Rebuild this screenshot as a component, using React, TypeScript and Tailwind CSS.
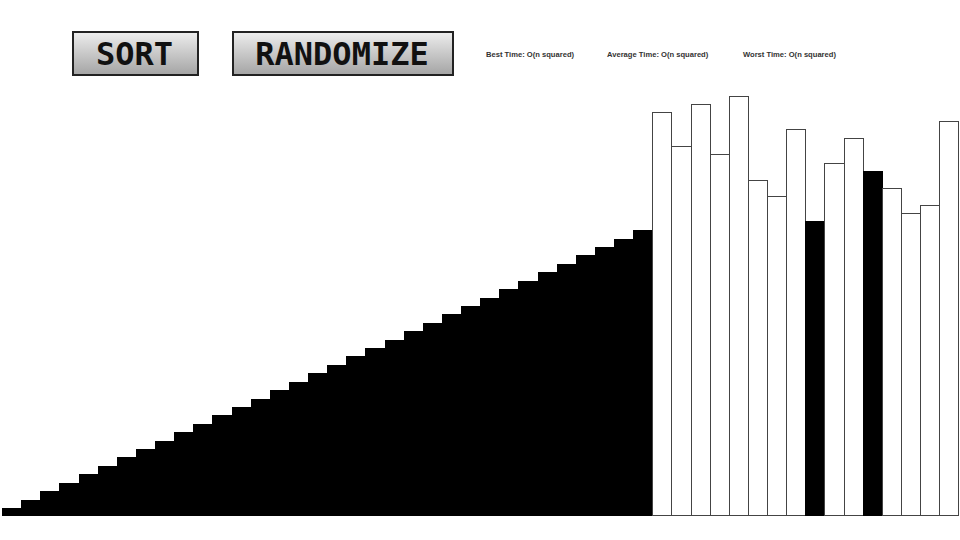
const sortedCount = 34;
const restTops = [112, 146, 104, 154, 96, 180, 196, 129, 221, 163, 138, 171, 188, 213, 205, 121];
const doneTops = [221, 171];
const baseline = 516;

const bars = [
  ...Array.from({ length: sortedCount }, (_, i) => ({ height: 8 + i * 8.42, done: true })),
  ...restTops.map((top) => ({ height: baseline - top, done: doneTops.includes(top) })),
];

const stats = [
  { label: "Best Time: O(n squared)", width: "w-[121px]" },
  { label: "Average Time: O(n squared)", width: "w-[136px]" },
  { label: "Worst Time: O(n squared)", width: "w-[120px]" },
];

function Button({ label, width }: { label: string; width: string }) {
  return (
    <button
      className={`${width} h-[45px] pr-[2px] border-2 border-[#222] bg-gradient-to-b from-[#ececec] to-[#a6a6a6] font-['DejaVu_Sans_Mono',monospace] text-[32px] font-bold leading-none text-[#111]`}
    >
      {label}
    </button>
  );
}

export default function App() {
  return (
    <div className="w-[960px] h-[540px] bg-white overflow-hidden">
      <div className="h-[96px] pl-[72px] pt-[31px] flex items-start">
        <Button label="SORT" width="w-[127px]" />
        <div className="w-[33px]" />
        <Button label="RANDOMIZE" width="w-[222px]" />
        <div className="flex ml-[32px] pt-[17px] font-['Liberation_Sans',sans-serif] text-[7.6px] font-bold leading-[13px] text-[#333]">
          {stats.map((s) => (
            <div key={s.label} className={s.width}>
              {s.label}
            </div>
          ))}
        </div>
      </div>
      <div className="h-[420px] px-[2px] flex items-end">
        {bars.map((bar, i) => (
          <div
            key={i}
            className={`flex-1 border mr-[-1px] ${bar.done ? "bg-black border-black" : "bg-white border-[#444]"}`}
            style={{ height: bar.height }}
          />
        ))}
      </div>
    </div>
  );
}
